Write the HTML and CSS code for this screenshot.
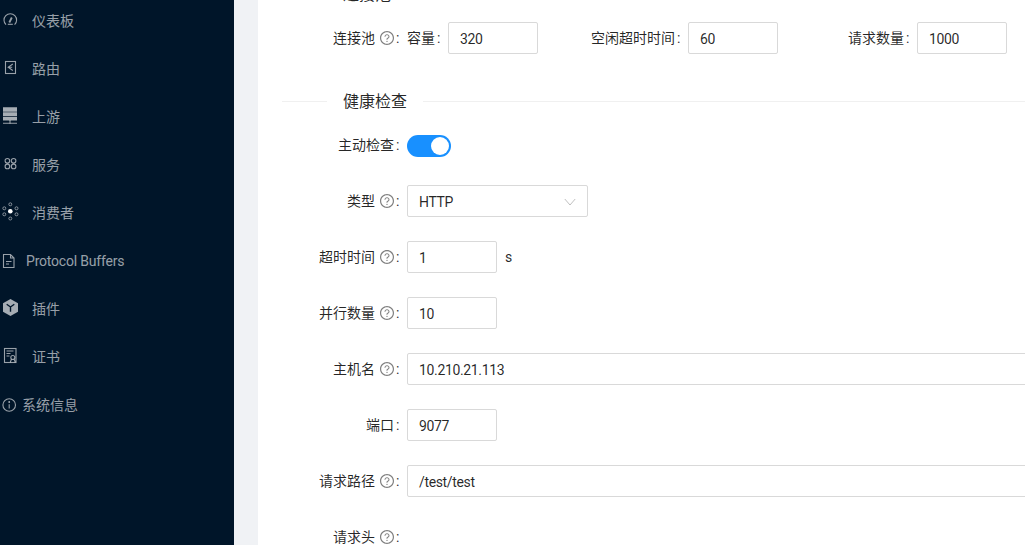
FILE: index.html
```html
<!DOCTYPE html>
<html lang="zh-CN">
<head>
<meta charset="utf-8">
<title>健康检查</title>
<link rel="stylesheet" href="styles.css">
</head>
<body>
<svg class="defs" width="0" height="0" aria-hidden="true">
  <symbol id="help" viewBox="64 64 896 896">
    <path d="M512 64C264.6 64 64 264.6 64 512s200.6 448 448 448 448-200.6 448-448S759.4 64 512 64zm0 820c-205.4 0-372-166.6-372-372s166.6-372 372-372 372 166.6 372 372-166.6 372-372 372z"/>
    <path d="M623.6 316.7C593.6 290.4 554 276 512 276s-81.6 14.5-111.6 40.7C369.2 344 352 380.7 352 420v7.6c0 4.4 3.6 8 8 8h48c4.4 0 8-3.6 8-8V420c0-44.1 43.1-80 96-80s96 35.9 96 80c0 31.1-22 59.6-56.1 72.7-21.2 8.1-39.2 22.3-52.1 40.9-13.1 19-19.9 41.8-19.9 64.9V620c0 4.4 3.6 8 8 8h48c4.4 0 8-3.6 8-8v-22.7a48.3 48.3 0 0 1 30.9-44.8c59-22.7 97.1-74.7 97.1-132.5.1-39.3-17.1-76-48.3-103.3zM472 732a40 40 0 1 0 80 0 40 40 0 1 0-80 0z"/>
  </symbol>
</svg>
<div class="layout">
  <nav class="sider">
    <a class="item"><svg class="ic" viewBox="0 0 16 16"><path class="ln" d="M3 11.600A6.300 6.300 0 1 1 11.600 11.600"/><path class="ln thick" d="M6.300 9.500L8.800 4.500"/><path class="ln" d="M4.800 11.300h5"/></svg><span class="label">仪表板</span></a>
    <a class="item"><svg class="ic" viewBox="0 0 16 16"><rect class="ln" x="2.500" y=".5" width="10" height="12"/><path class="ln" d="M9.800 3L5.200 6.200l4.600 3.300M5.200 6.200h4"/></svg><span class="label">路由</span></a>
    <a class="item"><svg class="ic" viewBox="0 0 16 16"><path class="fl" d="M0-1.700h14V2.700H0zM0 3.300h14V7H0zM0 7.700h14v3.700H0z"/><path class="ln" d="M7 11v4M0 14.300h14"/></svg><span class="label">上游</span></a>
    <a class="item"><svg class="ic" viewBox="0 0 16 16"><circle class="ln" cx="4.400" cy="3.800" r="2.300"/><circle class="ln" cx="10.600" cy="3.800" r="2.300"/><circle class="ln" cx="4.400" cy="9.400" r="2.300"/><circle class="ln" cx="10.600" cy="9.400" r="2.300"/></svg><span class="label">服务</span></a>
    <a class="item"><svg class="ic" viewBox="0 0 16 16"><circle cx="7.300" cy="6.300" r="2.300" fill="#fff"/><circle class="ln thin" cx="7.300" cy="-.7" r="1.500"/><circle class="ln thin" cx="7.300" cy="13.500" r="1.500"/><circle class="ln thin" cx="1.300" cy="3.300" r="1.500"/><circle class="ln thin" cx="13.500" cy="3.300" r="1.500"/><circle class="ln thin" cx="1.300" cy="9.300" r="1.500"/><circle class="ln thin" cx="13.500" cy="9.300" r="1.500"/></svg><span class="label">消费者</span></a>
    <a class="item item-proto"><svg class="ic" viewBox="0 0 16 16"><path class="ln" d="M.5 1.500h7l3.500 3.500v9.500H.5zM7.500 1.500V5H11"/><path class="ln" d="M3 8.500h5.500M3 11h3"/></svg><span class="label">Protocol Buffers</span></a>
    <a class="item"><svg class="ic" viewBox="0 0 16 16"><path class="fl" d="M7.500-2l7.500 4.200v8.600L7.500 15 0 10.800V2.200z"/><path d="M3.700 3.300L7.500 6l3.800-2.700M7.500 6v4.800" fill="none" stroke="#001529" stroke-width="1.400"/></svg><span class="label">插件</span></a>
    <a class="item"><svg class="ic" viewBox="0 0 16 16"><rect class="ln" x="1.500" y="-.5" width="11.500" height="14"/><path class="ln" d="M3.500 2h7M3.500 4.500h4M3.500 7h3"/><circle class="ln" cx="9.800" cy="8.500" r="2"/><path class="ln" d="M8.300 10.500l-1 2.800M11.300 10.500l1 2.800"/></svg><span class="label">证书</span></a>
    <a class="item item-info"><svg class="ic" viewBox="0 0 16 16"><circle class="ln" cx="7.200" cy="8" r="6.300"/><path class="ln" d="M7.200 7.200v4.300"/><circle class="fl" cx="7.200" cy="5" r=".9"/></svg><span class="label">系统信息</span></a>
  </nav>
  <div class="gutter"></div>
  <main class="content">
    <div class="divider"><span class="divider-text">连接池</span></div>

    <div class="row row-pool">
      <div class="form-label">连接池<svg class="help"><use href="#help"/></svg><span class="colon">:</span></div>
      <div class="pool-field"><span class="pool-label">容量<span class="colon">:</span></span><div class="input short">320</div></div>
      <div class="pool-field pool-idle"><span class="pool-label">空闲超时时间<span class="colon">:</span></span><div class="input short">60</div></div>
      <div class="pool-field pool-req"><span class="pool-label">请求数量<span class="colon">:</span></span><div class="input short">1000</div></div>
    </div>

    <div class="divider divider-section"><span class="divider-text">健康检查</span></div>

    <div class="row">
      <div class="form-label">主动检查<span class="colon">:</span></div>
      <div class="switch"><span class="knob"></span></div>
    </div>
    <div class="row">
      <div class="form-label">类型<svg class="help"><use href="#help"/></svg><span class="colon">:</span></div>
      <div class="input select">HTTP<svg class="chev" viewBox="0 0 12 8"><path d="M.8 1l5.200 6 5.200-6"/></svg></div>
    </div>
    <div class="row">
      <div class="form-label">超时时间<svg class="help"><use href="#help"/></svg><span class="colon">:</span></div>
      <div class="input short">1</div><span class="unit">s</span>
    </div>
    <div class="row">
      <div class="form-label">并行数量<svg class="help"><use href="#help"/></svg><span class="colon">:</span></div>
      <div class="input short">10</div>
    </div>
    <div class="row">
      <div class="form-label">主机名<svg class="help"><use href="#help"/></svg><span class="colon">:</span></div>
      <div class="input wide">10.210.21.113</div>
    </div>
    <div class="row">
      <div class="form-label">端口<span class="colon">:</span></div>
      <div class="input short">9077</div>
    </div>
    <div class="row">
      <div class="form-label">请求路径<svg class="help"><use href="#help"/></svg><span class="colon">:</span></div>
      <div class="input wide">/test/test</div>
    </div>
    <div class="row">
      <div class="form-label">请求头<svg class="help"><use href="#help"/></svg><span class="colon">:</span></div>
    </div>
  </main>
</div>
</body>
</html>
```
FILE: styles.css
```css
* { box-sizing: border-box; }
html, body {
  margin: 0;
  height: 100%;
  overflow: hidden;
  background: #fff;
}
body {
  font-family: Roboto, "Noto Sans CJK SC", sans-serif;
  font-size: 14px;
  color: rgba(0, 0, 0, 0.85);
}
.defs { position: absolute; }
.layout { display: flex; height: 545px; }

.sider {
  width: 234px;
  flex: none;
  background: #001529;
  overflow: hidden;
}
.item {
  display: flex;
  align-items: center;
  height: 24px;
  margin: 9px 0 24px;
  padding-left: 3px;
  color: rgba(255, 255, 255, 0.6);
  line-height: 24px;
}
.item-proto .label { letter-spacing: -0.2px; }
.ic {
  width: 16px;
  height: 16px;
  flex: none;
  margin-right: 13px;
  overflow: visible;
}
.item-proto .ic { margin-right: 7px; }
.item-info { padding-left: 2px; }
.item-info .ic { margin-right: 4px; }
.ln { fill: none; stroke: rgba(255, 255, 255, 0.6); stroke-width: 1.100; }
.thin { stroke-width: .8; }
.thick { stroke-width: 1.800; }
.fl { fill: rgba(255, 255, 255, 0.65); }

.gutter { width: 24px; flex: none; background: #f0f2f5; }
.content {
  flex: 1;
  min-width: 0;
  padding-left: 24px;
  overflow: hidden;
  margin-top: -18px;
}

.divider {
  display: flex;
  align-items: center;
  height: 24px;
  margin-bottom: 16px;
  font-size: 16px;
  line-height: 24px;
}
.divider::before {
  content: "";
  width: 45px;
  border-top: 1px solid #f0f0f0;
}
.divider::after {
  content: "";
  flex: 1;
  border-top: 1px solid #f0f0f0;
}
.divider-text { padding: 2px 16px 0; }
.divider-section { margin-top: 35px; }

.row {
  display: flex;
  align-items: center;
  height: 32px;
  margin-bottom: 24px;
}
.row-pool { margin-bottom: 0; }
.form-label {
  width: 125px;
  flex: none;
  white-space: nowrap;
  display: flex;
  justify-content: flex-end;
  align-items: center;
  line-height: 22px;
}
.colon {
  display: inline-block;
  width: 13px;
  padding-left: 2px;
}
.help {
  width: 14px;
  height: 14px;
  margin-left: 5px;
  fill: rgba(0, 0, 0, 0.5);
}
.input {
  height: 32px;
  border: 1px solid #d9d9d9;
  border-radius: 2px;
  padding: 1px 11px 0;
  line-height: 30px;
  letter-spacing: -0.35px;
  background: #fff;
  color: rgba(0, 0, 0, 0.85);
  flex: none;
}
.short { width: 90px; }
.wide { width: 700px; }
.select {
  width: 181px;
  display: flex;
  justify-content: space-between;
  align-items: center;
}
.chev {
  width: 12px;
  height: 8px;
  fill: none;
  stroke: rgba(0, 0, 0, 0.25);
  stroke-width: 1;
}
.unit { margin-left: 8px; }

.pool-field { display: flex; align-items: center; flex: none; }
.pool-label { white-space: nowrap; display: flex; line-height: 22px; }
.pool-idle { margin-left: 53px; }
.pool-req { margin-left: 70px; }

.switch {
  width: 44px;
  height: 22px;
  margin-top: 2px;
  border-radius: 11px;
  background: #1890ff;
  display: flex;
  align-items: center;
  justify-content: flex-end;
  padding-right: 2px;
}
.knob {
  width: 18px;
  height: 18px;
  border-radius: 50%;
  background: #fff;
}
```
